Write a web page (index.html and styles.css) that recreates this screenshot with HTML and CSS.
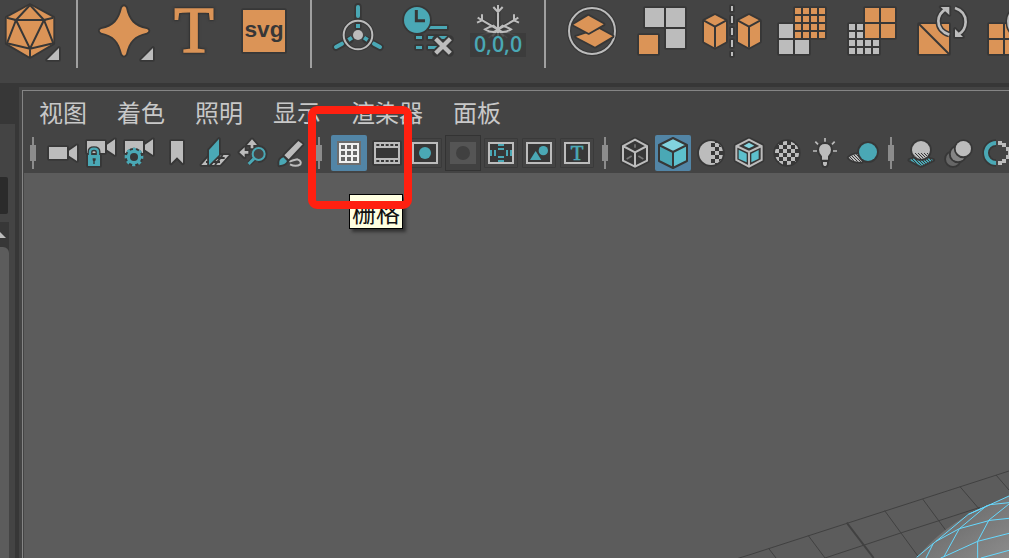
FILE: index.html
```html
<!DOCTYPE html>
<html lang="zh-CN">
<head>
<meta charset="utf-8">
<title>视图面板</title>
<link rel="stylesheet" href="styles.css">
</head>
<body>
<svg class="defs" aria-hidden="true">
  <defs>
    <pattern id="check" width="24" height="24" patternUnits="userSpaceOnUse" x="105" y="48"><path class="g" d="M0 0h12v12h-12zM12 12h12v12h-12z"/></pattern>
    <pattern id="hatch" width="9" height="9" patternUnits="userSpaceOnUse"><path d="M-2 -2l13 13M-2 7l4 4M7 -2l4 4" stroke="#373737" stroke-width="3"/></pattern>
    <linearGradient id="ball" x1="0" y1="0" x2="1" y2="1"><stop offset="0" stop-color="#444"/><stop offset=".3" stop-color="#6c6c6c"/><stop offset="1" stop-color="#8c8c8c"/></linearGradient>
  </defs>
</svg>

<header class="shelf">
  <button class="tool tool-first" aria-label="多面体"><svg viewBox="-15 0 210 249">
    <path class="o halo" d="M90 15L160 53V130L90 171L20 130V53Z"/>
    <path class="cut" d="M90 15L48 60H132ZM20 53L48 60L21 130L90 146L160 130L132 60L160 53M48 60L90 146L132 60M90 146V171"/>
    <path class="g halo" d="M177 144V180H141Z"/></svg></button>
  <hr class="shelf-sep">
  <button class="tool" aria-label="超形状"><svg viewBox="267 0 210 249">
    <path class="o halo" d="M366 23Q372 14 378 23C386 61 402 79 440 87Q451 92 440 98C403 106 386 124 378 162Q372 172 366 162C357 124 342 106 304 98Q294 92 304 87C342 79 357 61 366 23Z"/>
    <path class="g halo" d="M459 144V180H423Z"/></svg></button>
  <button class="tool" aria-label="类型"><svg viewBox="477 0 210 249"><text class="o serif big-t" x="582" y="157" font-size="194" text-anchor="middle">T</text></svg></button>
  <button class="tool" aria-label="SVG"><svg viewBox="687 0 210 249"><path class="o halo" d="M729 30h126v126h-126z"/><text class="sans bold dark" x="792" y="111" font-size="68" text-anchor="middle">svg</text></svg></button>
  <hr class="shelf-sep">
  <button class="tool" aria-label="轴心"><svg viewBox="69 0 210 249">
    <path class="halo-line" d="M174 20V80M108 142L150 119M240 142L198 119"/>
    <path class="t-line" stroke-width="12" stroke-linecap="round" d="M174 21V48M108 141L126 131M240 141L222 131"/>
    <circle cx="174" cy="105" r="43" fill="none" stroke="#373737" stroke-width="12"/>
    <path class="t-line" stroke-width="12" d="M174 72V84M145 120L156 113M203 120L192 113"/>
    <circle class="g-line" cx="174" cy="105" r="43" stroke-width="6"/><circle class="g" cx="174" cy="105" r="15"/></svg></button>
  <button class="tool" aria-label="删除历史"><svg viewBox="279 0 210 249">
    <path class="t halo" d="M387 78h54v9h-54zM348 108h18v9h-18zM384 108h57v9h-57zM348 138h18v9h-18zM384 138h40v9h-40z"/><path class="cut" d="M409 103v20"/>
    <circle class="t halo" cx="351" cy="60" r="39"/><path d="M349 30V62H375" fill="none" stroke="#373737" stroke-width="9"/>
    <path class="x-halo" d="M409 118L449 158M449 118L409 158"/><path class="g-line" stroke-width="13" d="M407 116L451 160M451 116L407 160"/></svg></button>
  <button class="tool" aria-label="冻结变换"><svg viewBox="489 0 210 249">
    <path class="flake-halo" d="M594 17V105M536 57L594 90L652 57"/>
    <path d="M594 90L532 109M594 90L656 109M594 90L566 114M594 90L622 114" fill="none" stroke="#777" stroke-width="4"/>
    <path class="g-line" stroke-width="6" d="M594 15V114M580 21L594 36L608 21M533 53L594 89L655 53M546 43V61L531 68M642 43V61L657 68M594 88L580 77Q568 80 555 88Q570 97 582 96L594 88L608 77Q620 80 633 88Q618 97 606 96L594 88M594 88L577 109M594 88L611 109"/>
    <path class="zero-bg" d="M510 99h168v72h-168z"/><text class="t zero" x="594" y="156" font-size="64" text-anchor="middle">0,0,0</text></svg></button>
  <hr class="shelf-sep">
  <button class="tool" aria-label="合并"><svg viewBox="21 0 210 249">
    <circle cx="126" cy="93" r="69" fill="none" stroke="#373737" stroke-width="13"/><circle class="g-line" cx="126" cy="93" r="69" stroke-width="6"/>
    <path class="o halo" d="M78 110L148 87L188 109L135 140Z"/><path class="o halo" d="M70 74L115 47L161 73L116 99Z"/></svg></button>
  <button class="tool" aria-label="提取"><svg viewBox="231 0 210 249"><path class="g halo" d="M285 24h57v57h-57zM348 24h57v57h-57zM348 87h57v57h-57z"/><path class="o halo" d="M267 105h57v57h-57z"/></svg></button>
  <button class="tool" aria-label="镜像"><svg viewBox="441 0 210 249">
    <path class="o halo" d="M495 45L528 62V125L495 143L462 125V62ZM597 45L630 62V125L597 143L564 125V62Z"/><path class="cut" d="M462 62L495 80L528 62M495 80V143M564 62L597 80L630 62M597 80V143"/>
    <path class="g halo" d="M543 18h6v15h-6zM543 48h6v21h-6zM543 84h6v21h-6zM543 120h6v21h-6zM543 156h6v12h-6z"/></svg></button>
  <button class="tool" aria-label="平滑"><svg viewBox="-9 0 210 249">
    <path class="g halo" d="M27 72h42v42h-42zM27 120h42v42h-42zM75 120h42v42h-42z"/>
    <path class="o halo" d="M75 24h90v90h-90z"/><path class="cut" d="M96 24v90M120 24v90M144 24v90M75 45h90M75 69h90M75 93h90"/></svg></button>
  <button class="tool" aria-label="减少"><svg viewBox="201 0 210 249">
    <path class="g halo" d="M237 72h90v90h-90z"/><path class="cut" d="M258 72v90M282 72v90M306 72v90M237 93h90M237 117h90M237 141h90"/>
    <path class="o halo" d="M285 24h42v42h-42zM333 24h42v42h-42zM285 72h42v42h-42zM333 72h42v42h-42z"/></svg></button>
  <button class="tool" aria-label="重新划分"><svg viewBox="411 0 210 249">
    <path class="o halo" d="M447 72h90v90h-90z"/><path class="cut" d="M447 72L537 162"/>
    <path d="M538 104Q505 93 505 63Q506 39 528 27M555 24Q587 34 587 66Q586 92 566 103" fill="none" stroke="#373737" stroke-width="17"/>
    <path class="g halo" d="M512 21H538V45ZM555 87V111H579Z"/>
    <path class="g-line" stroke-width="8" d="M538 104Q505 93 505 63Q506 39 528 27M555 24Q587 34 587 66Q586 92 566 103"/></svg></button>
  <button class="tool" aria-label="重新拓扑"><svg viewBox="621 0 210 249">
    <path class="o halo" d="M657 72h42v42h-42zM705 72h42v42h-42zM657 120h42v42h-42zM705 120h42v42h-42z"/>
    <path d="M738 104Q715 93 715 63Q716 39 738 27" fill="none" stroke="#373737" stroke-width="17"/><path class="g-line" stroke-width="8" d="M738 104Q715 93 715 63Q716 39 738 27"/></svg></button>
</header>

<main class="workspace">
  <aside class="side">
    <div class="side-panel"><div class="side-field"></div><div class="side-scroll"><svg class="side-arrow" viewBox="0 0 6 6"><path class="g" d="M0 0L6 6H0Z"/></svg><div class="side-thumb"></div></div></div>
  </aside>
  <section class="frame">
    <div class="panel">
      <nav class="menu"><button>视图</button><button>着色</button><button>照明</button><button>显示</button><button>渲染器</button><button>面板</button></nav>
      <div class="toolbar">
        <span class="grip"></span>
        <button class="icon" aria-label="选择摄影机"><svg viewBox="135 150 108 108"><path class="g halo" d="M147 186h54v36h-54zM231 181V228L207 212V197Z"/></svg></button>
        <button class="icon" aria-label="锁定摄影机"><svg viewBox="249 150 108 108"><path class="g halo" d="M261 168h54v36h-54zM345 163V210L321 194V179Z"/><path d="M270 213V201Q270 191 282 191Q294 191 294 201V213" fill="none" stroke="#373737" stroke-width="15"/><path class="t halo" d="M264 210h36v33h-36z"/><path class="t-line" stroke-width="7" d="M270 211V201Q270 191 282 191Q294 191 294 201V211"/><path class="dark" d="M278 220h9v6l-3 3v8h-4v-8l-2-3z"/></svg></button>
        <button class="icon" aria-label="摄影机属性"><svg viewBox="363 150 108 108"><path class="g halo" d="M375 168h54v36h-54zM459 163V210L435 194V179Z"/><circle class="t halo" cx="402" cy="216" r="22"/><circle cx="402" cy="216" r="23" fill="none" stroke="#4aa8b5" stroke-width="10" stroke-dasharray="9 9.06" stroke-dashoffset="4"/><circle class="dark" cx="402" cy="216" r="12"/></svg></button>
        <button class="icon" aria-label="书签"><svg viewBox="477 150 108 108"><path class="g halo" d="M513 168h36v67l-18-18l-18 18z"/></svg></button>
        <button class="icon" aria-label="图像平面"><svg viewBox="591 150 108 108"><path class="g halo" d="M630 210H687L660 240H604Z"/><path class="cut" d="M618 231H660M628 219H674M650 210L632 240M668 210L645 240"/><path class="t halo" d="M657 162V210L627 240V195Z"/></svg></button>
        <button class="icon" aria-label="二维平移缩放"><svg viewBox="705 150 108 108"><path class="g halo" d="M756 163L771 180H760V190H752V180H741ZM718 202L734 187V198H745V206H734V217Z"/><path d="M776 188a19 19 0 1 1-1 38M763 220L748 236" fill="none" stroke="#373737" stroke-width="16"/><circle cx="776" cy="207" r="18" fill="#444" stroke="#4aa8b5" stroke-width="6"/><path class="t-line" stroke-width="9" d="M762 221L746 237"/></svg></button>
        <button class="icon" aria-label="油性铅笔"><svg viewBox="819 150 108 108"><path class="g-line" stroke-width="6" d="M868 230Q880 225 892 223Q906 228 901 238Q888 247 870 238"/><path class="g halo" d="M895 168L908 178L866 223L853 211Z"/><path class="t halo" d="M850 217L861 228Q856 239 838 241Q835 222 850 217Z"/></svg></button>
        <span class="grip"></span>
        <button class="icon active" aria-label="栅格"><svg viewBox="123 135 108 108"><path fill="#6d6d6d" d="M141 153h72v72h-72z"/><path fill="#f0f0f0" d="M147 159h60v60h-60z"/><path fill="#666" d="M153 165h12v12h-12zM171 165h12v12h-12zM189 165h12v12h-12zM153 183h12v12h-12zM171 183h12v12h-12zM189 183h12v12h-12zM153 201h12v12h-12zM171 201h12v12h-12zM189 201h12v12h-12z"/></svg></button>
        <button class="icon" aria-label="胶片门"><svg viewBox="237 135 108 108"><path class="g halo" d="M252 156h78v66h-78z"/><path class="dark" d="M258 174h66v30h-66z"/><path d="M259 165H324M259 213H324" stroke="#373737" stroke-width="6" stroke-dasharray="9 5"/></svg></button>
        <button class="icon" aria-label="分辨率门"><svg viewBox="351 135 108 108"><path class="box" d="M369 159h72v60h-72z"/><circle class="t" cx="405" cy="189" r="18"/></svg></button>
        <button class="icon disabled" aria-label="门遮罩" disabled><svg viewBox="465 135 108 108"><path fill="#555" d="M480 156h78v66h-78z"/><circle fill="#404040" cx="519" cy="189" r="21"/></svg></button>
        <button class="icon" aria-label="区域图"><svg viewBox="9 30 108 108"><path class="box" d="M27 54h72v60h-72z"/><path class="t" d="M54 57h18v6h-18zM54 69h18v6h-18zM54 93h18v6h-18zM54 105h18v6h-18zM30 75h6v18h-6zM42 75h6v18h-6zM78 75h6v18h-6zM90 75h6v18h-6z"/></svg></button>
        <button class="icon" aria-label="安全动作"><svg viewBox="123 30 108 108"><path class="box" d="M141 54h72v60h-72z"/><path class="t" d="M167 78L184 105H150Z"/><circle class="t" cx="190" cy="77" r="14"/></svg></button>
        <button class="icon" aria-label="安全标题"><svg viewBox="237 30 108 108"><path class="box" d="M255 54h72v60h-72z"/><text class="t serif small-t" x="291" y="105" font-size="62" text-anchor="middle">T</text></svg></button>
        <span class="grip"></span>
        <button class="icon" aria-label="线框"><svg viewBox="411 30 108 108"><path class="cube-halo" d="M465 44L501 63V107L465 125L429 107V63Z"/><path d="M465 58V68M440 102L455 93M475 93L490 102" stroke="#777" stroke-width="5"/><path class="g-line" stroke-width="6" d="M465 44L501 63V107L465 125L429 107V63ZM429 63L465 82L501 63M465 82V125"/></svg></button>
        <button class="icon active" aria-label="着色显示"><svg viewBox="525 30 108 108"><path fill="#4aa8b5" d="M537 60L579 81V128L537 108Z"/><path fill="#5dc0cd" d="M621 60L579 81V128L621 108Z"/><path fill="#82d3de" d="M579 39L621 60L579 81L537 60Z"/><path class="cube-line" d="M579 39L621 60V108L579 129L537 108V60ZM537 60L579 81L621 60M579 81V129"/></svg></button>
        <button class="icon" aria-label="默认材质"><svg viewBox="639 30 108 108"><circle class="g halo" cx="693" cy="84" r="36"/><path class="dark" d="M693 54h12v12h-12zM693 78h12v12h-12zM693 102h12v12h-12zM705 66h12v12h-12zM705 90h12v12h-12zM717 78h12v12h-12zM717 57l8 9h-8zM717 102h8l-8 9zM705 48l12 6h-12zM705 114h10l-10 6z"/></svg></button>
        <button class="icon" aria-label="着色对象上的线框"><svg viewBox="-27 30 108 108"><path class="cube-halo" d="M27 44L65 63V105L27 125L-11 105V63Z"/><path fill="#5dc0cd" d="M-4 74L20 86V112L-4 101ZM34 86L56 75V101L34 112Z"/><path fill="#82d3de" d="M27 53L43 62L27 70L11 62Z"/><path class="g-line" stroke-width="6" d="M27 44L65 63V105L27 125L-11 105V63ZM-11 63L27 81L65 63M27 81V125"/></svg></button>
        <button class="icon" aria-label="带纹理"><svg viewBox="87 30 108 108"><circle class="dark" cx="141" cy="84" r="41"/><circle cx="141" cy="84" r="36" fill="url(#check)"/></svg></button>
        <button class="icon" aria-label="使用所有灯光"><svg viewBox="201 30 108 108"><path class="g halo" d="M246 104V94Q237 86 237 74Q238 57 255 57Q272 57 273 74Q273 86 264 94V104ZM249 111h12v7l-3 5h-6l-3-5z"/><path class="g-line" stroke-width="5" d="M255 39V50M226 50L234 58M284 50L276 58M219 78H231M279 78H291"/></svg></button>
        <button class="icon" aria-label="阴影"><svg viewBox="315 30 108 108"><path class="g halo" d="M326 98Q342 84 365 88V111Q338 111 326 98Z"/><path fill="url(#hatch)" d="M326 98Q342 84 365 88V111Q338 111 326 98Z"/><circle class="t halo" cx="384" cy="81" r="27"/></svg></button>
        <span class="grip"></span>
        <button class="icon" aria-label="环境光遮挡"><svg viewBox="489 30 108 108"><path class="t halo" d="M508 105L543 93L580 105L543 123Z"/><path fill="url(#hatch)" d="M508 105L543 93L580 105L543 123Z"/><circle class="g halo" cx="543" cy="75" r="27"/><path fill="url(#hatch)" d="M519 84H568Q558 101 543 102Q527 101 519 84Z"/></svg></button>
        <button class="icon" aria-label="运动模糊"><svg viewBox="603 30 108 108"><circle class="halo" fill="#666" cx="639" cy="102" r="21"/><circle class="halo" fill="#858585" cx="654" cy="87" r="22"/><circle class="g halo" cx="670" cy="71" r="23"/></svg></button>
        <button class="icon" aria-label="抗锯齿"><svg viewBox="717 30 108 108"><path d="M768 54A30 30 0 0 0 768 114" fill="none" stroke="#373737" stroke-width="22"/><path class="t-line" stroke-width="12" d="M768 54A30 30 0 0 0 768 114"/><path class="g" d="M774 48h12v12h-12zM786 54h12v12h-12zM798 66h12v12h-12zM804 78h12v12h-12zM798 90h12v12h-12zM786 102h12v12h-12zM774 108h12v12h-12z"/></svg></button>
      </div>
      <div class="viewport">
        <svg class="scene" viewBox="0 0 777 324">
          <path class="grid" d="M-110 348L0 314L777 63M225 324L455 248L570 211L690 172M55 294L78 324M175 257L225 324M404 182L508 324M518 147L620 285M630 110L690 180M738 75L777 120"/>
          <path class="grid grid-axis" d="M290 218L371 324"/>
          <path fill="url(#ball)" d="M500 324Q590 215 720 164L777 138V324Z"/>
          <path class="wire" d="M500 322L558 274L655 193L720 164L777 138M558 274L628 236L720 211L777 205M628 236L710 167M655 193L720 164L777 158M550 280L528 324M628 236L582 320L683 274L777 250M777 162L717 210L683 274V324M693 324L777 301M582 320L572 324"/>
        </svg>
      </div>
    </div>
  </section>
</main>
<div class="tooltip" role="tooltip">栅格</div>
<div class="marker"></div>
</body>
</html>
```
FILE: styles.css
```css
* { box-sizing: border-box; }
body {
  margin: 0;
  height: 100vh;
  display: flex;
  flex-direction: column;
  overflow: hidden;
  position: relative;
  background: #444;
  color: #c8c8c8;
  font: 24px/33px "Noto Sans CJK SC", sans-serif;
}
button { border: 0; padding: 0; background: none; color: inherit; font: inherit; flex: none; }
svg { display: block; }
.defs { position: absolute; width: 0; height: 0; }

/* shelf */
.shelf { display: flex; flex: none; height: 83px; overflow: hidden; }
.tool { width: 70px; height: 83px; }
.tool svg { width: 70px; height: 83px; overflow: visible; }
.tool-first { margin-left: -5px; }
.shelf-sep { flex: none; width: 2px; height: 68px; margin: 0 11px; border: 0; background: #a0a0a0; }

/* icon paint */
.g { fill: #bcbcbc; }
.o { fill: #db9457; }
.t { fill: #4aa8b5; }
.dark { fill: #373737; }
.halo { stroke: #373737; stroke-width: 11px; stroke-linejoin: round; paint-order: stroke; }
.cut { fill: none; stroke: #373737; stroke-width: 6px; }
.g-line { fill: none; stroke: #bcbcbc; }
.t-line { fill: none; stroke: #4aa8b5; }
.halo-line { fill: none; stroke: #373737; stroke-width: 22px; stroke-linecap: round; }
.x-halo { fill: none; stroke: #373737; stroke-width: 25px; stroke-linecap: round; }
.flake-halo { fill: none; stroke: #3b3b3b; stroke-width: 16px; }
.zero-bg { fill: #3b3b3b; fill-opacity: .8; }
.box { fill: #373737; stroke: #bcbcbc; stroke-width: 6px; outline: 2px solid #373737; }
.cube-halo { fill: #373737; stroke: #373737; stroke-width: 16px; stroke-linejoin: round; }
.cube-line { fill: none; stroke: #373737; stroke-width: 6px; stroke-linejoin: round; }
.serif { font-family: "Liberation Serif", serif; }
.big-t { stroke: #db9457; stroke-width: 5px; filter: drop-shadow(0 0 3px #2a2a2a) drop-shadow(0 0 3px #333); }
.small-t { stroke: #4aa8b5; stroke-width: 2px; }
.sans { font-family: "Liberation Sans", sans-serif; }
.zero { font-family: "Open Sans", sans-serif; font-weight: 600; }
.bold { font-weight: 700; }

/* workspace */
.workspace { flex: 1; min-height: 0; display: flex; padding-top: 4px; background: #373737; }
.side { flex: none; width: 19px; padding: 37px 4px 0 0; display: flex; }
.side-panel { flex: 1; padding-top: 53px; background: #444; display: flex; flex-direction: column; }
.side-field { width: 8px; height: 37px; background: #2b2b2b; border-radius: 0 2px 2px 0; }
.side-scroll { flex: 1; width: 9px; margin-top: 8px; padding-top: 10px; background: #373737; display: flex; flex-direction: column; }
.side-arrow { width: 6px; height: 6px; }
.side-thumb { flex: 1; margin-top: 9px; background: #5c5c5c; border-radius: 0 6px 0 0; }
.frame { flex: 1; min-width: 0; padding: 3px 0 0 3px; background: #444; display: flex; }
.panel {
  flex: 1;
  min-width: 0;
  padding-left: 1px;
  border: solid #858585;
  border-width: 1px 0 0 1px;
  display: flex;
  flex-direction: column;
}
.menu { display: flex; flex: none; gap: 30px; padding: 4px 15px 7px; }
.menu button { height: 33px; }
.toolbar { display: flex; flex: none; height: 38px; overflow: hidden; }
.grip { flex: none; width: 6px; height: 32px; margin: 2px 8px 0 6px; background: linear-gradient(#8c8c8c, #8c8c8c) center / 6px 16px no-repeat, linear-gradient(#8c8c8c, #8c8c8c) center / 2px 32px no-repeat; }
.icon { width: 36px; height: 36px; margin: 0 1px; border-radius: 2px; }
.icon svg { width: 36px; height: 36px; }
.active { background: #5285a6; }
.disabled { background: #414141; box-shadow: inset 0 0 0 1px #333; border-radius: 0; }
.viewport { flex: 1; min-height: 0; background: #5c5c5c; position: relative; overflow: hidden; }
.scene { position: absolute; right: 0; bottom: 0; width: 259px; height: 108px; overflow: visible; }
.grid { fill: none; stroke: #414141; stroke-width: 3px; }
.grid-axis { stroke-width: 6px; }
.wire { fill: none; stroke: #66d9ff; stroke-width: 3px; }

/* overlays */
.tooltip {
  position: absolute;
  left: 349px;
  top: 194px;
  padding: 0 2px;
  border: 1px solid #000;
  background: #ffffe1;
  color: #111;
  box-shadow: 3px 3px 3px rgba(0, 0, 0, .45);
}
.marker {
  position: absolute;
  left: 308px;
  top: 106px;
  width: 104px;
  height: 103px;
  border: 8px solid #ff2010;
  border-radius: 9px;
}
```
